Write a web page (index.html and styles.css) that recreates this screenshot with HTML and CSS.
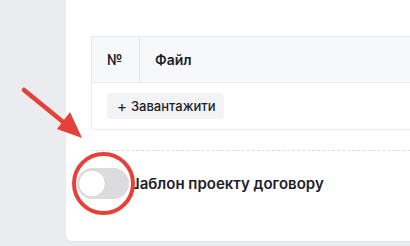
FILE: index.html
```html
<!DOCTYPE html>
<html lang="uk">
<head>
  <meta charset="UTF-8">
  <meta name="viewport" content="width=device-width, initial-scale=1">
  <title>Шаблон договору</title>
  <link rel="stylesheet" href="styles.css">
</head>
<body>
  <div class="page">
    <div class="card">
      <!-- Files table -->
      <div class="files">
        <div class="files-head">
          <div class="col-num">№</div>
          <div class="col-file">Файл</div>
        </div>
        <div class="files-body">
          <button class="upload-btn"><span class="plus">+</span> Завантажити</button>
        </div>
      </div>

      <div class="divider"></div>

      <!-- Template switch -->
      <label class="switch-row">
        <span class="switch"><span class="knob"></span></span>
        <span class="switch-label">Шаблон проекту договору</span>
      </label>
    </div>

    <!-- Annotation layer -->
    <svg class="annotation" width="410" height="246" viewBox="0 0 410 246">
      <line x1="24" y1="90" x2="68" y2="126" stroke="#e5403a" stroke-width="4.5" stroke-linecap="round"/>
      <polygon points="82,138 57,129 70,112" fill="#e5403a"/>
      <circle cx="103.5" cy="183.5" r="30" fill="#fff"/>
      <rect x="77" y="168" width="52" height="31" rx="15.5" fill="#dcdcde"/>
      <circle cx="92" cy="183.5" r="13.3" fill="#fff" stroke="#cfcfd2" stroke-width="0.8"/>
      <circle cx="103.5" cy="183.5" r="29.5" fill="none" stroke="#e5403a" stroke-width="4"/>
    </svg>
  </div>
</body>
</html>
```

FILE: styles.css
```css
body {
  margin: 0;
  background-color: #ebecef;
  font-family: Inter, "Noto Sans", sans-serif;
  color: #1d2129;
  overflow: hidden;
}
.page {
  position: relative;
  width: 410px;
  height: 246px;
  overflow: hidden;
}
.card {
  margin-left: 66px;
  width: 420px;
  height: 241px;
  box-sizing: border-box;
  padding: 36px 0 0 25px;
  background: #fff;
  border-radius: 0 0 6px 6px;
  box-shadow: 0 1px 2px rgba(0,0,0,0.04);
}
.files {
  border: 1px solid #e9eaed;
}
.files-head {
  display: flex;
  height: 45px;
  background: #f7f8fa;
  border-bottom: 1px solid #e9eaed;
  font-size: 14px;
  font-weight: 600;
}
.files-head > div {
  display: flex;
  align-items: center;
  padding-left: 15px;
}
.col-num {
  width: 32px;
  border-right: 1px solid #e9eaed;
}
.files-body {
  padding: 10px 15px;
}
.upload-btn {
  display: flex;
  align-items: center;
  gap: 4px;
  height: 26px;
  padding: 0 9px 0 10px;
  border: none;
  border-radius: 4px;
  background: #f2f3f5;
  font-family: inherit;
  font-size: 13px;
  font-weight: 500;
  color: #1d2129;
}
.plus {
  font-size: 15px;
  font-weight: 400;
}
.divider {
  margin-top: 20px;
  border-top: 1px dashed #dcdde0;
}
.switch-row {
  display: flex;
  align-items: center;
  gap: 10px;
  margin-top: 23px;
}
.switch {
  width: 24px;
  height: 14px;
  border-radius: 7px;
  background: #dcdcde;
}
.switch-label {
  font-size: 15px;
  font-weight: 600;
}
.annotation {
  position: absolute;
  top: 0;
  left: 0;
}
```
